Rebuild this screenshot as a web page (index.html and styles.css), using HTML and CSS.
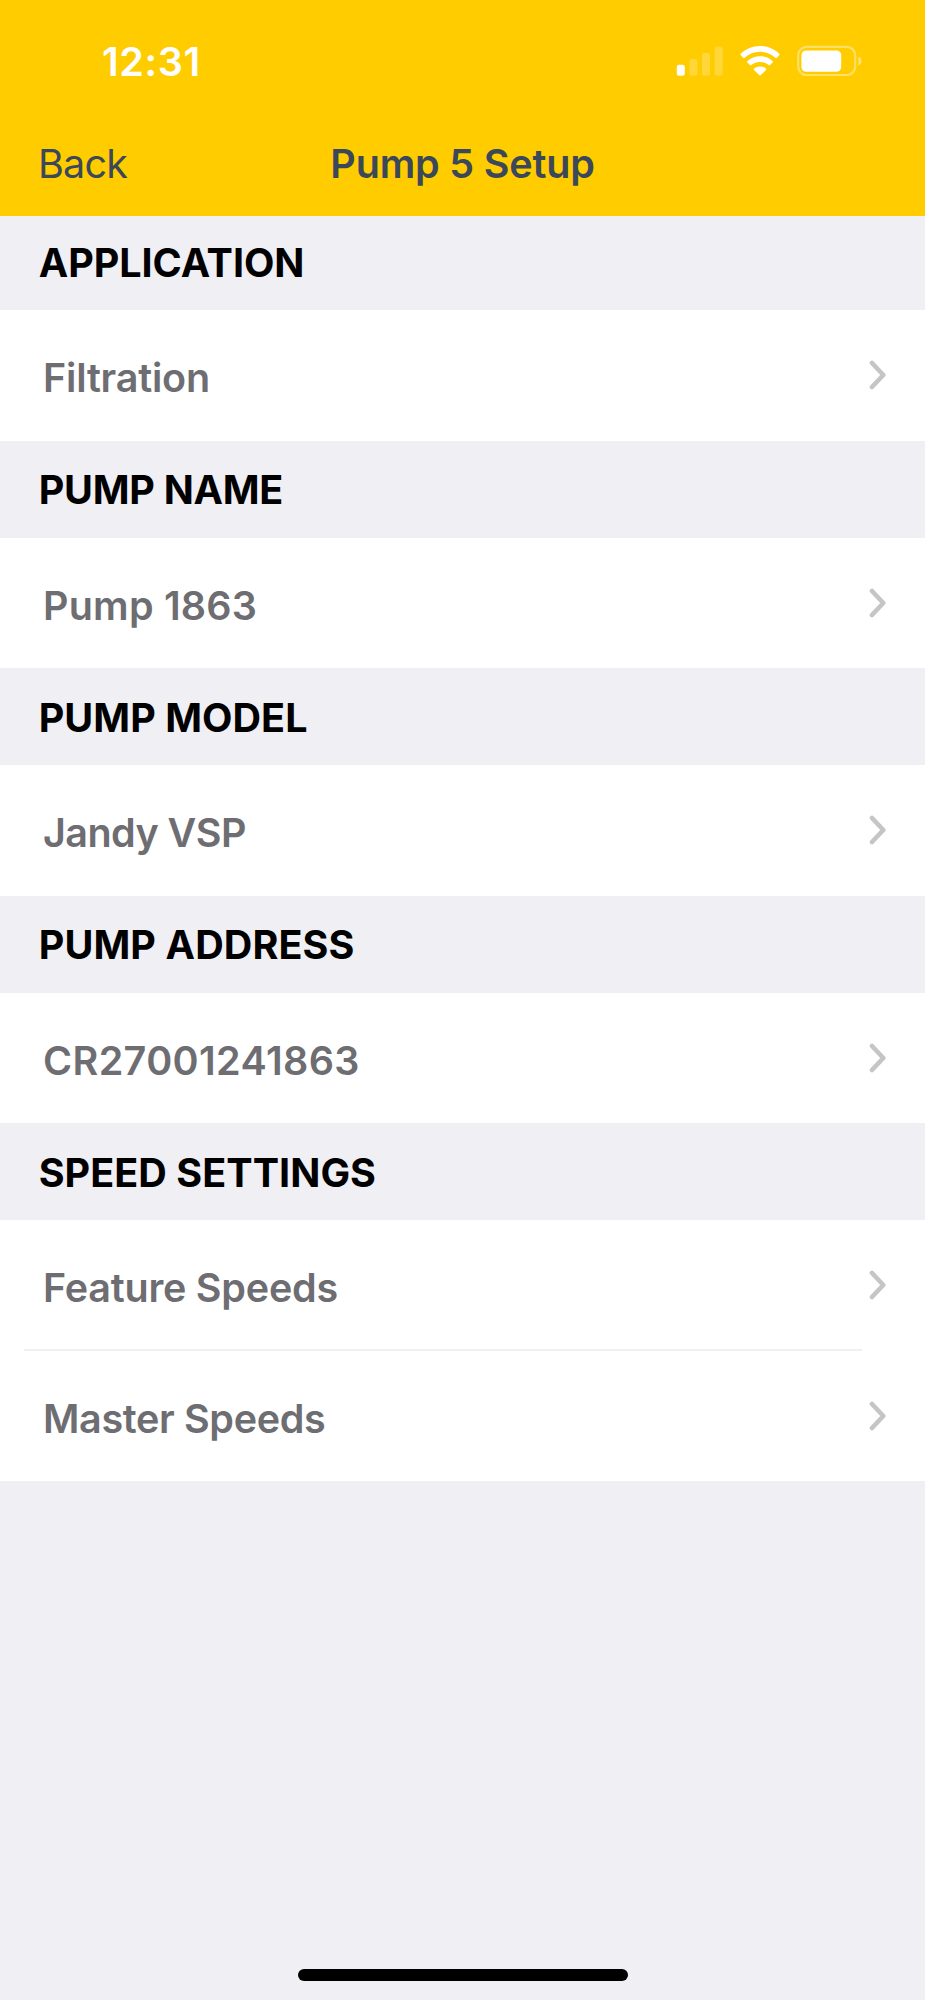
FILE: index.html
```html
<!DOCTYPE html>
<html lang="en">
<head>
    <meta charset="UTF-8">
    <meta name="viewport" content="width=device-width, initial-scale=1.0">
    <title>Pump 5 Setup</title>
    <link rel="stylesheet" href="styles.css">
</head>
<body>
    <svg class="defs" width="0" height="0">
        <symbol id="chevron" viewBox="0 0 18 30">
            <path d="M3 3 L14.3 15 L3 27" fill="none" stroke="#c5c5c7" stroke-width="4.6" stroke-linecap="round" stroke-linejoin="round"/>
        </symbol>
    </svg>

    <header class="top">
        <div class="status-bar">
            <span class="time">12:31</span>
            <div class="status-icons">
                <!-- Signal -->
                <svg width="47" height="31" viewBox="0 0 47 31" fill="#fff">
                    <rect x="0.8" y="19.8" width="8" height="11" rx="2.2"/>
                    <rect x="13.4" y="14" width="8" height="16.8" rx="2.2" opacity="0.22"/>
                    <rect x="26" y="8" width="8" height="22.8" rx="2.2" opacity="0.22"/>
                    <rect x="38.7" y="1.6" width="8" height="29.2" rx="2.2" opacity="0.22"/>
                </svg>
                <!-- Wifi -->
                <svg width="40" height="31" viewBox="0 0 40 31" fill="#fff">
                    <path d="M20 1 C27.6 1 34.3 4 39.2 8.7 Q40 9.5 39.2 10.3 L36.9 12.7 Q36.1 13.4 35.3 12.7 C31.2 8.9 25.9 6.8 20 6.8 C14.1 6.8 8.8 8.9 4.7 12.7 Q3.9 13.4 3.1 12.7 L0.8 10.3 Q0 9.5 0.8 8.7 C5.7 4 12.4 1 20 1 Z"/>
                    <path d="M20 11.2 C24.9 11.2 29.3 13.1 32.6 16.1 Q33.4 16.8 32.6 17.6 L30.2 20 Q29.4 20.7 28.6 20 C26.2 18 23.3 16.9 20 16.9 C16.7 16.9 13.8 18 11.4 20 Q10.6 20.7 9.8 20 L7.4 17.6 Q6.6 16.8 7.4 16.1 C10.7 13.1 15.1 11.2 20 11.2 Z"/>
                    <path d="M20 21.4 C22.2 21.4 24.3 22.1 25.9 23.4 Q26.7 24.1 26 24.9 L20.8 30.1 Q20 30.8 19.2 30.1 L14 24.9 Q13.3 24.1 14.1 23.4 C15.7 22.1 17.8 21.4 20 21.4 Z"/>
                </svg>
                <!-- Battery -->
                <svg width="65" height="31" viewBox="0 0 65 31">
                    <rect x="1.2" y="1.9" width="57" height="28.2" rx="8.5" fill="none" stroke="#fff" stroke-width="2.2" opacity="0.4"/>
                    <rect x="4.4" y="5.4" width="39.8" height="21.4" rx="4.8" fill="#fff"/>
                    <path d="M61.4 11.4 C63.3 12.2 64.5 13.9 64.5 16 C64.5 18.1 63.3 19.8 61.4 20.6 Z" fill="#fff" opacity="0.45"/>
                </svg>
            </div>
        </div>
        <nav class="nav-bar">
            <a class="back">Back</a>
            <h1>Pump 5 Setup</h1>
        </nav>
    </header>

    <main>
        <section>
            <h2 class="first">Application</h2>
            <a class="row"><span class="filtration">Filtration</span><svg class="chevron"><use href="#chevron"/></svg></a>
        </section>
        <section>
            <h2 class="name-title">Pump Name</h2>
            <a class="row"><span class="name">Pump 1863</span><svg class="chevron"><use href="#chevron"/></svg></a>
        </section>
        <section>
            <h2>Pump Model</h2>
            <a class="row"><span class="model">Jandy VSP</span><svg class="chevron"><use href="#chevron"/></svg></a>
        </section>
        <section>
            <h2 class="address-title">Pump Address</h2>
            <a class="row"><span class="address">CR27001241863</span><svg class="chevron"><use href="#chevron"/></svg></a>
        </section>
        <section>
            <h2>Speed Settings</h2>
            <a class="row divided"><span class="feature">Feature Speeds</span><svg class="chevron"><use href="#chevron"/></svg></a>
            <a class="row"><span class="master">Master Speeds</span><svg class="chevron"><use href="#chevron"/></svg></a>
        </section>
    </main>

    <footer>
        <div class="home-indicator"></div>
    </footer>
</body>
</html>
```
FILE: styles.css
```css
* { box-sizing: border-box; }
body { font-family: Inter, "Liberation Sans", sans-serif; font-size: 39.5px; margin: 0; height: 2000px; background: #efeff4; display: flex; flex-direction: column; overflow: hidden; }
h1, h2 { margin: 0; font-size: inherit; }
.defs { display: block; position: absolute; }

/* Header */
.top { background: #ffcc00; height: 215.5px; flex: none; }
.status-bar { height: 122px; display: flex; justify-content: space-between; padding: 0 63px 0 102px; }
.time { color: #fff; font-weight: 600; line-height: 48px; padding-top: 38px; letter-spacing: 0.6px; }
.status-icons { display: flex; padding-top: 45px; }
.status-icons svg { display: block; flex: none; }
.status-icons svg:nth-child(1) { margin-right: 17px; }
.status-icons svg:nth-child(2) { margin-right: 17.5px; }
.nav-bar { display: grid; grid-template-columns: 1fr auto 1fr; padding: 18px 38px 0; line-height: 48px; color: #3b4859; }
.nav-bar h1 { font-weight: 600; letter-spacing: -0.18px; }
.back { font-weight: 400; letter-spacing: -0.8px; }

/* Sections */
h2 { height: 97.1px; padding: 25.6px 38.7px 0; line-height: 48px; font-weight: 700; text-transform: uppercase; color: #000; white-space: nowrap; letter-spacing: 0.05px; }
h2.first { height: 94.8px; padding-top: 23.3px; letter-spacing: -0.05px; }
h2.name-title { letter-spacing: -0.25px; }
h2.address-title { letter-spacing: 0.12px; }
.row { height: 130.4px; background: #fff; color: #6d6d72; font-weight: 600; display: flex; justify-content: space-between; padding: 44px 38.5px 0 43px; line-height: 48px; }
.row.divided { background: linear-gradient(#f0f0f1, #f0f0f1) 24px 100% / 838px 2px no-repeat #fff; }
.filtration { letter-spacing: -0.2px; }
.name { letter-spacing: 0.22px; }
.model { letter-spacing: -0.55px; }
.address { letter-spacing: 0.38px; }
.feature { letter-spacing: -0.22px; }
.master { letter-spacing: -0.34px; }
.chevron { width: 18px; height: 30px; margin-top: 6px; }

/* Home indicator */
footer { margin-top: auto; padding-bottom: 19px; }
.home-indicator { width: 330px; height: 12px; margin: 0 auto; border-radius: 6px; background: #000; }
```
